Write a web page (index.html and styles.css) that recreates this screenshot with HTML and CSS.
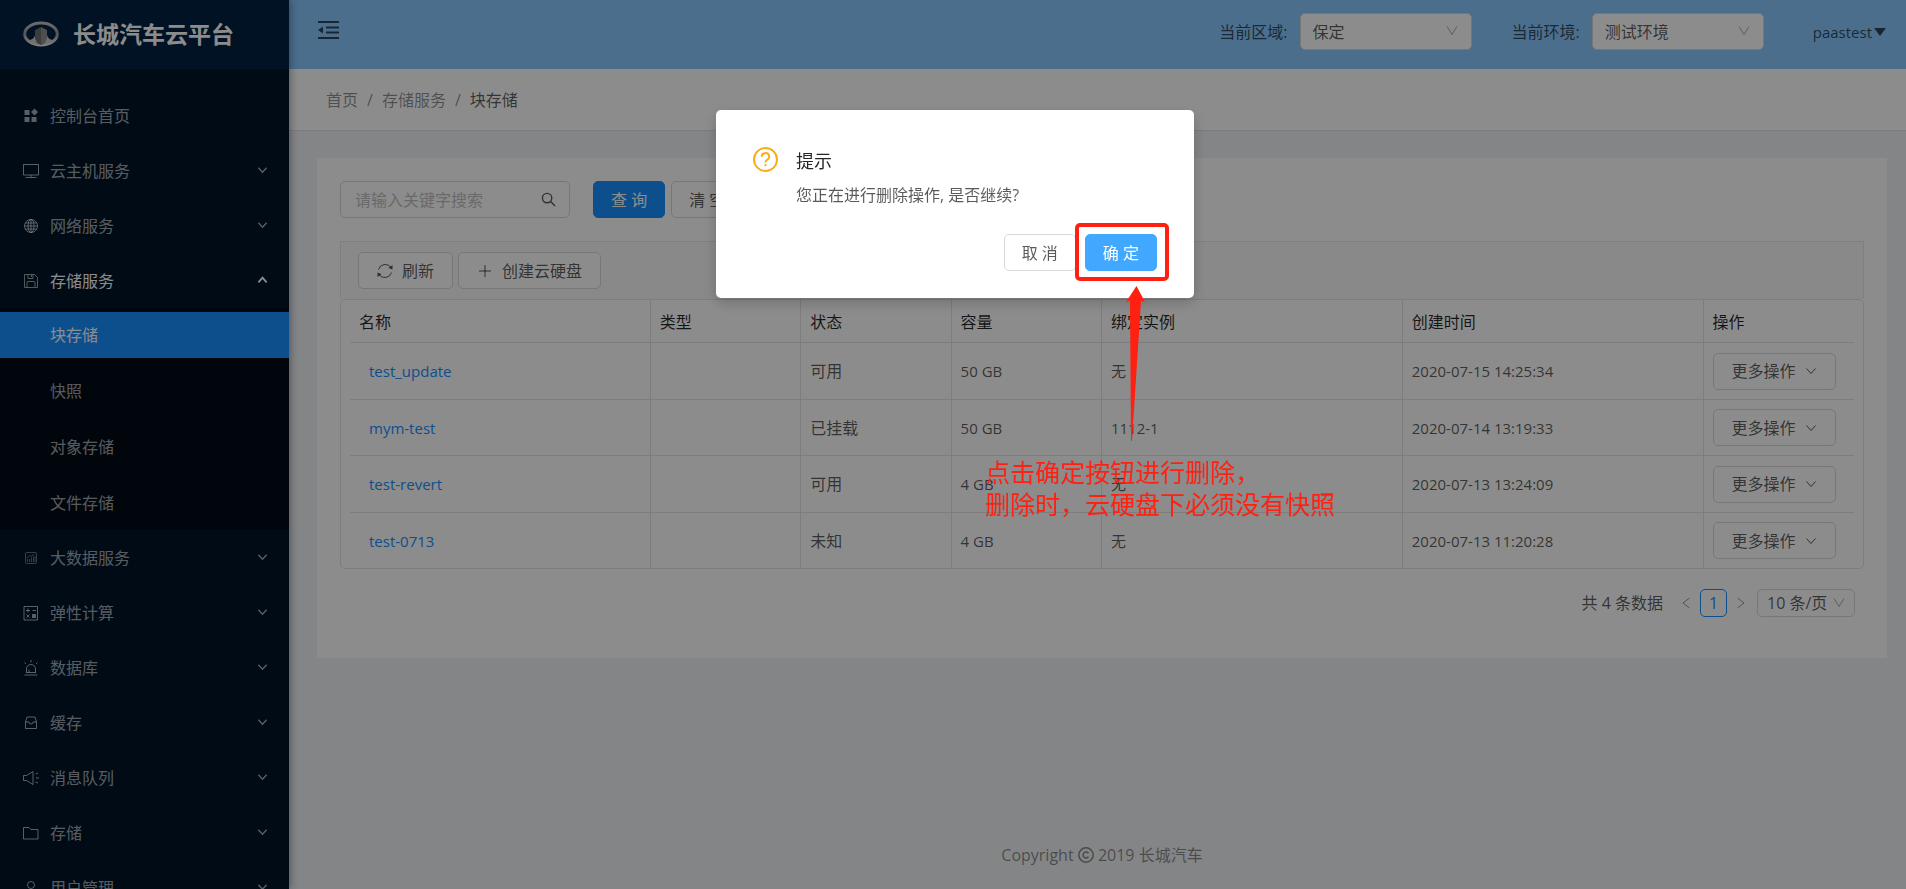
FILE: index.html
```html
<!DOCTYPE html>
<html lang="zh-CN">
<head>
<meta charset="utf-8">
<title>长城汽车云平台</title>
<link rel="stylesheet" href="styles.css">
</head>
<body>
<svg class="sprite" aria-hidden="true">
  <symbol id="chevron" viewBox="0 0 12 12"><path d="M1.5 3.5 6 8.5l4.500-5"/></symbol>
  <symbol id="sharp" viewBox="0 0 12 12"><path d="M1 1.500 6 9.500l5-8"/></symbol>
</svg>
<div class="layout">
  <aside class="sidebar">
    <div class="brand">
      <svg class="brand-logo" viewBox="0 0 36 26">
        <defs><linearGradient id="metal" x1="0" y1="0" x2="0" y2="1"><stop offset="0" stop-color="#c4c4c4"/><stop offset=".5" stop-color="#999"/><stop offset="1" stop-color="#eee"/></linearGradient></defs>
        <ellipse cx="18" cy="13" rx="16.300" ry="11" fill="none" stroke="url(#metal)" stroke-width="3"/>
        <path d="M5 19q6 0 7-5h12q1 5 7 5-5 5-13 5T5 19z" fill="#ccc"/>
        <path d="M12 9l6-3v18l-4-2-2-5z" fill="#6d6d6d"/><path d="M24 9l-6-3v18l4-2 2-5z" fill="#8f8f8f"/>
      </svg>
      <h1 class="brand-name">长城汽车云平台</h1>
    </div>
    <nav class="menu">
      <a class="item" href="#"><svg class="ico solid" viewBox="0 0 16 16"><path d="M1.500 2h5v5h-5zM1.500 9h5v5h-5zM8.500 9h5v5h-5zM11.500.5 15 4l-3.500 3.500L8 4z"/></svg><span>控制台首页</span></a>
      <a class="item" href="#"><svg class="ico" viewBox="0 0 16 16"><path d="M.5 1.500h15v10.500H.5zM8 12v2M2.500 14.500h11"/></svg><span>云主机服务</span><svg class="arrow"><use href="#chevron"/></svg></a>
      <a class="item" href="#"><svg class="ico" viewBox="0 0 16 16"><circle cx="8" cy="8" r="6.500"/><ellipse cx="8" cy="8" rx="3" ry="6.500"/><path d="M1.500 8h13M2.500 5h11M2.500 11h11M8 1.500v13"/></svg><span>网络服务</span><svg class="arrow"><use href="#chevron"/></svg></a>
      <a class="item open" href="#"><svg class="ico dim" viewBox="0 0 16 16"><path d="M1.500 1.500h10l3 3v10h-13zM5 1.500v4h5v-4M8.500 2v2M4 14.500v-5q0-1 1-1h6q1 0 1 1v5"/></svg><span>存储服务</span><svg class="arrow up"><use href="#chevron"/></svg></a>
      <div class="submenu">
        <a class="subitem selected" href="#">块存储</a>
        <a class="subitem" href="#">快照</a>
        <a class="subitem" href="#">对象存储</a>
        <a class="subitem" href="#">文件存储</a>
      </div>
      <a class="item" href="#"><svg class="ico dim" viewBox="0 0 16 16"><rect x="2.500" y="2.500" width="11" height="11" rx="1"/><path d="M4.500 12v-3M6.500 12V9M8.500 12V7.500M10.500 12V6.500M12 12V6M4 8l3-2.500 1 1L11.500 4"/></svg><span>大数据服务</span><svg class="arrow"><use href="#chevron"/></svg></a>
      <a class="item" href="#"><svg class="ico" viewBox="0 0 16 16"><path d="M1 1.500h13.500v13.500H1zM3 5.500h4M5 3.500v4M9.500 5.500H13M3.500 9.500l3 3M6.500 9.500l-3 3"/><rect class="fill" x="9" y="9" width="4" height="4"/></svg><span>弹性计算</span><svg class="arrow"><use href="#chevron"/></svg></a>
      <a class="item" href="#"><svg class="ico" viewBox="0 0 16 16"><path d="M1.500 15h13M3 12.500h10M3.500 12.500V9a4.500 4.500 0 0 1 9 0v3.500M6 9.500v3M8 0v2.500M1.500 2.500 3 4M14.500 2.500 13 4"/></svg><span>数据库</span><svg class="arrow"><use href="#chevron"/></svg></a>
      <a class="item" href="#"><svg class="ico" viewBox="0 0 16 16"><path d="M2.500 7l1.500-5h8l1.500 5v6.500h-11zM2.500 7H6q0 2 2 2t2-2h3.500"/></svg><span>缓存</span><svg class="arrow"><use href="#chevron"/></svg></a>
      <a class="item" href="#"><svg class="ico" viewBox="0 0 16 16"><path d="M.5 5.500h3L10 1.500v13l-6.500-4h-3zM13 8h3M12.500 4 15 3M12.500 12l2.500 1"/></svg><span>消息队列</span><svg class="arrow"><use href="#chevron"/></svg></a>
      <a class="item" href="#"><svg class="ico" viewBox="0 0 16 16"><path d="M.5 2.500h5.500l2 2h7v9.500H.5z"/></svg><span>存储</span><svg class="arrow"><use href="#chevron"/></svg></a>
      <a class="item" href="#"><svg class="ico" viewBox="0 0 16 16"><circle cx="8" cy="5" r="3.500"/><path d="M1.500 15.500q0-6 6.500-6t6.500 6"/></svg><span>用户管理</span><svg class="arrow"><use href="#chevron"/></svg></a>
    </nav>
  </aside>

  <div class="main">
    <header class="topbar">
      <button class="fold" type="button" aria-label="收起菜单"><svg viewBox="0 0 21 18"><path d="M0 1h21M8 6.500h13M8 11.500h13M0 17h21"/><path class="fill" d="M0 9l5-3.500v7z"/></svg></button>
      <div class="field">
        <label for="region">当前区域:</label>
        <span class="picker"><select id="region"><option>保定</option></select><svg><use href="#sharp"/></svg></span>
      </div>
      <div class="field">
        <label for="env">当前环境:</label>
        <span class="picker"><select id="env"><option>测试环境</option></select><svg><use href="#sharp"/></svg></span>
      </div>
      <button class="user" type="button">paastest<svg viewBox="0 0 12 8"><path d="M0 0h12L6 8z"/></svg></button>
    </header>

    <nav class="crumbs"><a href="#">首页</a><i>/</i><a href="#">存储服务</a><i>/</i><span>块存储</span></nav>

    <main class="card">
      <form class="search">
        <span class="searchbox"><input type="text" placeholder="请输入关键字搜索" aria-label="关键字"><svg viewBox="0 0 16 16"><circle cx="6.500" cy="6.500" r="5"/><path d="M10.500 10.500 15 15"/></svg></span>
        <div class="actions"><button class="btn primary" type="button">查 询</button><button class="btn" type="button">清 空</button></div>
      </form>
      <div class="toolbar">
        <button class="btn" type="button"><svg viewBox="0 0 16 16"><path d="M1.500 6.500a7 7 0 0 1 12.500-2M14.500 9.500A7 7 0 0 1 2 11.500"/><path class="fill" d="M15.500 2v4.500L11.500 5zM.5 14V9.500l4 1.500z"/></svg>刷新</button>
        <button class="btn" type="button"><svg viewBox="0 0 16 16"><path d="M8 2v12M2 8h12"/></svg>创建云硬盘</button>
      </div>
      <div class="tablebox">
        <table>
          <colgroup><col class="wide"><col><col><col><col class="wide"><col class="wide"><col></colgroup>
          <thead><tr><th>名称</th><th>类型</th><th>状态</th><th>容量</th><th>绑定实例</th><th>创建时间</th><th>操作</th></tr></thead>
          <tbody>
            <tr><td><a href="#">test_update</a></td><td></td><td>可用</td><td>50 GB</td><td>无</td><td>2020-07-15 14:25:34</td><td><button class="btn" type="button">更多操作<svg class="more"><use href="#chevron"/></svg></button></td></tr>
            <tr><td><a href="#">mym-test</a></td><td></td><td>已挂载</td><td>50 GB</td><td>1112-1</td><td>2020-07-14 13:19:33</td><td><button class="btn" type="button">更多操作<svg class="more"><use href="#chevron"/></svg></button></td></tr>
            <tr><td><a href="#">test-revert</a></td><td></td><td>可用</td><td>4 GB</td><td>无</td><td>2020-07-13 13:24:09</td><td><button class="btn" type="button">更多操作<svg class="more"><use href="#chevron"/></svg></button></td></tr>
            <tr><td><a href="#">test-0713</a></td><td></td><td>未知</td><td>4 GB</td><td>无</td><td>2020-07-13 11:20:28</td><td><button class="btn" type="button">更多操作<svg class="more"><use href="#chevron"/></svg></button></td></tr>
          </tbody>
        </table>
      </div>
      <div class="pager">
        <span class="total">共 4 条数据</span>
        <button class="step" type="button" aria-label="上一页"><svg viewBox="0 0 8 12"><path d="M7.500 1 1 6l6.500 5"/></svg></button>
        <button class="page" type="button">1</button>
        <button class="step" type="button" aria-label="下一页"><svg viewBox="0 0 8 12"><path d="M.5 1 7 6 .5 11"/></svg></button>
        <span class="picker small"><select aria-label="每页条数"><option>10 条/页</option></select><svg><use href="#sharp"/></svg></span>
      </div>
    </main>

    <footer class="footer">Copyright <svg viewBox="0 0 16 16"><circle cx="8" cy="8" r="7.200"/><path d="M10.500 6.200a3 3 0 1 0 0 3.600"/></svg> 2019 长城汽车</footer>
  </div>
</div>

<div class="mask">
  <div class="modal" role="dialog" aria-labelledby="dlg-title">
    <div class="modal-body">
      <svg class="question" viewBox="0 0 25 25"><circle cx="12.500" cy="12.500" r="11.500"/><path d="M8.800 9.800a3.700 3.500 0 1 1 5.200 3q-1.500.8-1.500 2.700"/><circle class="dot" cx="12.500" cy="18.200" r="1.100"/></svg>
      <div>
        <h2 id="dlg-title">提示</h2>
        <p>您正在进行删除操作, 是否继续?</p>
      </div>
    </div>
    <div class="modal-foot"><button class="btn" type="button">取 消</button><button class="btn confirm" type="button">确 定</button></div>
    <div class="mark-box"></div>
    <svg class="mark-arrow" viewBox="0 0 20 155"><path d="M11.500 0 20 16l-4-1L7 155H6L5 15l-4 1z"/></svg>
    <p class="mark-text">点击确定按钮进行删除，<br>删除时，云硬盘下必须没有快照</p>
  </div>
</div>
</body>
</html>
```
FILE: styles.css
```css
* { box-sizing: border-box; }
body {
  margin: 0;
  font: 16px/24px "Open Sans", "Noto Sans CJK SC", sans-serif;
  color: rgba(0, 0, 0, .65);
  overflow: hidden;
}
a { color: inherit; text-decoration: none; }
h1, h2, p { margin: 0; }
button, input, select { font: inherit; color: inherit; margin: 0; }
button { cursor: pointer; }
svg { fill: none; stroke: currentColor; flex: none; }
.fill { fill: currentColor; stroke: none; }
.sprite { position: absolute; width: 0; height: 0; }

.layout { display: flex; height: 100vh; }

/* sidebar */
.sidebar {
  z-index: 1;
  width: 289px;
  flex: none;
  overflow: hidden;
  background: #001529;
  box-shadow: 2px 0 7px rgba(0, 21, 41, .35);
}
.brand {
  display: flex;
  align-items: center;
  gap: 14px;
  height: 69px;
  padding: 0 0 2px 23px;
  background: #002140;
}
.brand-logo { width: 36px; height: 26px; stroke: none; }
.brand-name { font-size: 23px; line-height: 32px; color: #fff; }
.menu { padding-top: 24px; color: rgba(255, 255, 255, .65); }
.item {
  display: flex;
  align-items: center;
  height: 46px;
  margin-bottom: 9px;
  padding: 0 21px 0 23px;
}
.item span { flex: 1; }
.ico { width: 16px; height: 16px; margin-right: 11px; }
.solid { fill: currentColor; stroke: none; }
.dim { opacity: .6; }
.arrow { width: 11px; height: 12px; margin-bottom: 2px; stroke-width: 1.5; }
.up { transform: rotate(180deg); stroke-width: 2; }
.open { color: #fff; margin-bottom: 4px; }
.submenu {
  display: flex;
  flex-direction: column;
  gap: 10px;
  padding: 4px 0;
  margin-bottom: 5px;
  background: #000c17;
}
.subitem { height: 46px; line-height: 46px; padding-left: 50px; }
.selected { background: #1890ff; color: #fff; }

/* top bar */
.main { flex: 1; min-width: 0; display: flex; flex-direction: column; background: #f0f2f5; }
.topbar {
  display: flex;
  align-items: center;
  height: 69px;
  padding: 0 20px 6px 29px;
  background: #87c8ff;
}
.fold { display: flex; margin-right: auto; padding: 0 0 4px; border: 0; background: none; }
.fold svg { width: 21px; height: 18px; stroke-width: 2; }
.field { display: flex; align-items: center; gap: 12px; margin-right: 40px; }
.field + .user { margin-left: 9px; }
.picker { position: relative; display: block; width: 172px; }
.picker select {
  appearance: none;
  display: block;
  width: 100%;
  height: 37px;
  padding: 0 12px;
  border: 1px solid #d9d9d9;
  border-radius: 5px;
  background: #fff;
}
.picker svg { position: absolute; right: 14px; top: 12px; width: 12px; height: 12px; opacity: .5; pointer-events: none; }
.user { display: flex; align-items: center; gap: 2px; padding: 0; border: 0; background: none; font-size: 15px; }
.user svg { width: 12px; height: 8px; fill: currentColor; stroke: none; }

.crumbs {
  display: flex;
  gap: 9px;
  padding: 19px 37px 18px;
  border-bottom: 1px solid #e0e0e0;
  background: #fff;
}
.crumbs a, .crumbs i { color: rgba(0, 0, 0, .45); font-style: normal; }

/* content */
.card { margin: 27px 19px 0 28px; padding: 23px 23px 41px; background: #fff; }
.search { display: flex; gap: 23px; margin-bottom: 23px; }
.searchbox { position: relative; display: block; width: 230px; }
.searchbox input {
  display: block;
  width: 100%;
  height: 37px;
  padding: 0 40px 0 14px;
  border: 1px solid #d9d9d9;
  border-radius: 5px;
}
.searchbox input::placeholder { color: #bfbfbf; }
.searchbox svg { position: absolute; right: 14px; top: 11px; width: 15px; height: 15px; stroke-width: 1.5; }
.actions { display: flex; gap: 6px; }
.btn {
  display: inline-flex;
  align-items: center;
  gap: 9px;
  height: 37px;
  padding: 0 18px;
  border: 1px solid #d9d9d9;
  border-radius: 5px;
  background: #fff;
  white-space: nowrap;
}
.btn svg { width: 16px; height: 16px; }
.actions .btn, .modal-foot .btn { padding: 0 17px; }
.primary { border-color: #1890ff; background: #1890ff; color: #fff; }
.toolbar {
  display: flex;
  gap: 5px;
  padding: 10px 17px;
  border: 1px solid #e8e8e8;
  border-bottom: 0;
  background: #fafafa;
}
.tablebox { padding: 0 9px; border: 1px solid #e4e4e4; border-radius: 5px; }
table { width: 100%; table-layout: fixed; border-collapse: separate; border-spacing: 0; }
.wide { width: 20%; }
th, td { padding: 0 9px; border-bottom: 1px solid #e4e4e4; border-right: 1px solid #e4e4e4; text-align: left; font-weight: 400; }
th:last-child, td:last-child { border-right: 0; }
tbody tr:last-child td { border-bottom: 0; }
th { height: 43px; padding-top: 2px; color: rgba(0, 0, 0, .85); }
td { height: 56px; font-size: 15px; }
tbody tr:nth-child(odd) td { height: 57px; }
tbody tr:last-child td { height: 55px; }
td:nth-child(3), td .btn { font-size: 16px; }
td:first-child { padding-left: 19px; color: #1890ff; }
td .btn { vertical-align: middle; }
td .btn .more { width: 12px; height: 12px; }

.pager { display: flex; align-items: center; justify-content: flex-end; gap: 10px; margin-top: 20px; padding-right: 9px; }
.total { margin-right: 9px; }
.step { display: flex; padding: 0; border: 0; background: none; color: rgba(0, 0, 0, .4); }
.step svg { width: 8px; height: 12px; }
.page { width: 27px; height: 28px; padding: 0; border: 1px solid #1890ff; border-radius: 5px; background: #fff; color: #1890ff; }
.small { width: 98px; margin-left: 2px; }
.small select { height: 28px; padding: 0 9px; }
.small svg { right: 10px; top: 8px; }

.footer { margin-top: auto; padding: 0 0 22px 9px; text-align: center; color: rgba(0, 0, 0, .45); }
.footer svg { width: 16px; height: 16px; vertical-align: -2px; stroke-width: 1.5; }

/* dialog */
.mask {
  position: fixed;
  inset: 0;
  z-index: 10;
  display: flex;
  justify-content: center;
  align-items: flex-start;
  padding: 110px 0 0 4px;
  background: rgba(0, 0, 0, .45);
}
.modal {
  position: relative;
  width: 478px;
  padding: 37px 37px 27px;
  border-radius: 5px;
  background: #fff;
  box-shadow: 0 5px 14px rgba(0, 0, 0, .2);
}
.modal-body { display: flex; gap: 18px; }
.question { width: 25px; height: 25px; color: #faad14; stroke-width: 2; }
.question .dot { fill: currentColor; stroke: none; }
.modal h2 { font-size: 18px; line-height: 28px; font-weight: 400; color: rgba(0, 0, 0, .85); }
.modal-body p { margin-top: 8px; }
.modal-foot { display: flex; justify-content: flex-end; gap: 9px; margin-top: 27px; }
.confirm { border-color: #40a9ff; background: #40a9ff; color: #fff; }
.mark-box { position: absolute; left: 359px; top: 113px; width: 94px; height: 58px; border: 4px solid #ff2012; border-radius: 5px; }
.mark-arrow { position: absolute; left: 409px; top: 176px; width: 20px; height: 155px; fill: #ff2012; stroke: none; }
.mark-text { position: absolute; left: 269px; top: 346px; font-size: 25px; line-height: 32px; color: #ff2012; white-space: nowrap; }
```
